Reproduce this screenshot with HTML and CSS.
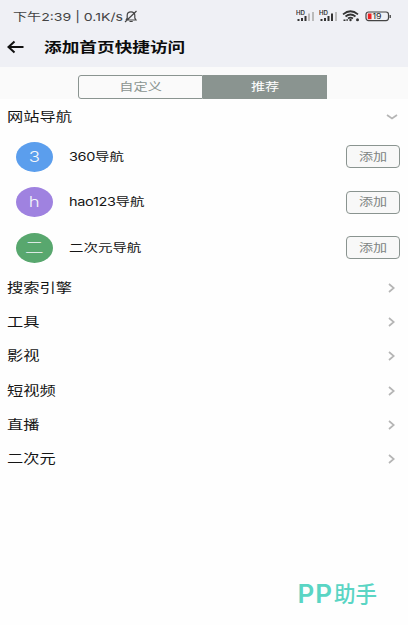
FILE: index.html
```html
<!DOCTYPE html>
<html lang="zh-CN">
<head>
    <meta charset="UTF-8">
    <meta name="viewport" content="width=device-width, initial-scale=1.0">
    <title>添加首页快捷访问</title>
    <link rel="stylesheet" href="styles.css">
</head>
<body>
    <header class="header">
        <div class="status-bar">
            <span class="status-text wide">下午2:39 | 0.1K/s</span>
            <svg class="mute" width="14" height="13" viewBox="0 0 14 13">
                <path d="M2 10h10l-1.2-2V5.2C10.800 3 9.200 1.800 7 1.800S3.200 3 3.200 5.200V8L2 10M5.500 11.500h3.200M1 12L12.500 1" />
            </svg>
            <div class="indicators">
                <svg width="19" height="12" viewBox="0 0 19 12">
                    <text class="hd" x="0" y="4.500" textLength="9" lengthAdjust="spacingAndGlyphs">HD</text>
                    <path class="dark" d="M1.500 9h2v2h-2zM5 8h2v3H5zM8.500 6h2v5h-2z" />
                    <path class="dim" d="M12 3.500h2V11h-2zM16 2h2v9h-2z" />
                </svg>
                <svg class="signal-two" width="19" height="12" viewBox="0 0 19 12">
                    <text class="hd" x="0" y="4.500" textLength="9" lengthAdjust="spacingAndGlyphs">HD</text>
                    <path class="dark" d="M1.500 9h2v2h-2zM5 8h2v3H5zM8.500 6h2v5h-2zM12 3.500h2V11h-2z" />
                    <path class="dim" d="M16 2h2v9h-2z" />
                </svg>
                <svg class="wifi" width="18" height="12" viewBox="0 0 18 12">
                    <path d="M1 4.300Q8.500-1.800 16 4.300M3.500 6.500Q8.500 2.500 13.500 6.500M6 8.500Q8.500 6.600 11 8.500" />
                    <circle class="dark" cx="8.500" cy="10" r="1.200" />
                    <path class="dark" d="M1.500 9.500h2v1.500h-2zM4.500 9h1.200v2H4.500z" />
                    <circle class="dark" cx="15.500" cy="9.800" r="1.500" />
                </svg>
                <svg class="battery" width="27" height="11" viewBox="0 0 27 11">
                    <rect class="shell" x="1" y="1" width="22.500" height="8.600" rx="2.500" />
                    <path class="dark" d="M24.600 4h1.200v3h-1.200z" />
                    <path class="level" d="M2.800 2.500h3.700v5.700H2.800z" />
                    <text class="percent" x="7.500" y="8" textLength="9" lengthAdjust="spacingAndGlyphs">19</text>
                </svg>
            </div>
        </div>
        <div class="title-bar">
            <svg width="18" height="14" viewBox="0 0 18 14">
                <path class="back" d="M17.500 7H2.500M8.500 1.500L2.500 7l6 5.500" />
            </svg>
            <h1 class="wide">添加首页快捷访问</h1>
        </div>
    </header>

    <nav class="tabs">
        <button class="tab"><span class="wide">自定义</span></button>
        <button class="tab active"><span class="wide">推荐</span></button>
    </nav>

    <main>
        <div class="section first">
            <span class="wide">网站导航</span>
            <svg class="chevron-down" width="12" height="6" viewBox="0 0 12 6"><path d="M1 1l5 3.500L11 1" /></svg>
        </div>
        <ul class="sites">
            <li class="site">
                <span class="avatar blue"><span class="wide">3</span></span>
                <span class="name wide"><span class="latin">360</span>导航</span>
                <button class="add"><span class="wide">添加</span></button>
            </li>
            <li class="site">
                <span class="avatar purple"><span class="wide">h</span></span>
                <span class="name wide"><span class="latin">hao123</span>导航</span>
                <button class="add"><span class="wide">添加</span></button>
            </li>
            <li class="site">
                <span class="avatar green"><span class="wide">二</span></span>
                <span class="name wide">二次元导航</span>
                <button class="add"><span class="wide">添加</span></button>
            </li>
        </ul>
        <div class="section">
            <span class="wide">搜索引擎</span>
            <svg class="chevron" width="7" height="10" viewBox="0 0 7 10"><path d="M1 1l4.800 4L1 9" /></svg>
        </div>
        <div class="section">
            <span class="wide">工具</span>
            <svg class="chevron" width="7" height="10" viewBox="0 0 7 10"><path d="M1 1l4.800 4L1 9" /></svg>
        </div>
        <div class="section">
            <span class="wide">影视</span>
            <svg class="chevron" width="7" height="10" viewBox="0 0 7 10"><path d="M1 1l4.800 4L1 9" /></svg>
        </div>
        <div class="section">
            <span class="wide">短视频</span>
            <svg class="chevron" width="7" height="10" viewBox="0 0 7 10"><path d="M1 1l4.800 4L1 9" /></svg>
        </div>
        <div class="section">
            <span class="wide">直播</span>
            <svg class="chevron" width="7" height="10" viewBox="0 0 7 10"><path d="M1 1l4.800 4L1 9" /></svg>
        </div>
        <div class="section">
            <span class="wide">二次元</span>
            <svg class="chevron" width="7" height="10" viewBox="0 0 7 10"><path d="M1 1l4.800 4L1 9" /></svg>
        </div>
    </main>

    <footer class="brand"><span class="brand-pp">PP</span><span>助手</span></footer>
</body>
</html>
```
FILE: styles.css
```css
* {
    margin: 0;
    padding: 0;
    box-sizing: border-box;
}

body {
    width: 408px;
    height: 625px;
    display: flex;
    flex-direction: column;
    overflow: hidden;
    background: #fefefe;
    color: #151515;
    font-family: Inter, "Noto Sans CJK SC", sans-serif;
}

svg {
    display: block;
    fill: none;
    flex: none;
}

button {
    font-family: inherit;
}

/* extended letterforms */
.wide {
    display: inline-block;
    transform: scaleX(1.28);
    transform-origin: left center;
    white-space: nowrap;
}

.header {
    height: 67px;
    background: #eff0f5;
}

.status-bar {
    height: 32px;
    display: flex;
    align-items: center;
    padding-left: 13px;
}

.status-text {
    width: 111px;
    font-size: 11px;
    color: #444;
}

.mute path {
    stroke: #444;
    stroke-width: 1.2;
}

.indicators {
    display: flex;
    align-items: center;
    margin-left: auto;
    padding-right: 16px;
}

.signal-two {
    margin-left: 4px;
}

.wifi {
    margin-left: 4px;
}

.wifi path {
    stroke: #333;
    stroke-width: 1.7;
}

.wifi .dark {
    stroke: none;
}

.battery {
    margin-left: 5px;
}

.dark {
    fill: #333;
}

.dim {
    fill: #bbb;
}

.hd {
    font-size: 5.5px;
    font-weight: 600;
    fill: #333;
}

.shell {
    stroke: #444;
    stroke-width: 1.2;
}

.level {
    fill: #ee2222;
}

.percent {
    font-size: 7.5px;
    fill: #222;
}

.title-bar {
    height: 30px;
    display: flex;
    align-items: center;
    padding-left: 6px;
}

.title-bar h1 {
    margin-left: 20px;
    font-size: 13.8px;
    font-weight: 700;
    line-height: 20px;
    color: #0c0c0c;
}

.back {
    stroke: #111;
    stroke-width: 2;
}

.tabs {
    height: 32px;
    display: flex;
    padding: 8px 81px 0 78px;
    background: #fafafa;
}

.tab {
    width: 125px;
    height: 24px;
    background: #fafafa;
    border: 1px solid #8a9490;
    border-radius: 3px 0 0 3px;
    color: #8a9490;
    font-size: 11.1px;
    line-height: 20px;
}

.tab .wide,
.avatar .wide,
.add .wide {
    transform-origin: center;
}

.tab.active {
    width: 124px;
    border-radius: 0;
    background: #8a9490;
    color: #fff;
}

.section {
    height: 34.3px;
    display: flex;
    align-items: center;
    justify-content: space-between;
    padding: 0 13px 0 6.5px;
    font-size: 12.7px;
    line-height: 20px;
}

.section.first {
    height: 35px;
    padding-right: 10px;
}

.chevron path,
.chevron-down path {
    stroke: #b5b5b5;
    stroke-width: 1.7;
}

.sites {
    list-style: none;
}

.site {
    height: 45.5px;
    display: flex;
    align-items: center;
    padding: 0 8px 0 16px;
}

.avatar {
    width: 37px;
    height: 30px;
    display: flex;
    align-items: center;
    justify-content: center;
    border-radius: 50%;
    color: #f4f6fa;
    font-size: 14.5px;
    font-weight: 300;
    line-height: 20px;
}

.blue {
    background: #5b9eed;
}

.purple {
    background: #9f82e0;
}

.green {
    background: #58a76e;
}

.name {
    margin-left: 15.5px;
    font-size: 11.3px;
    line-height: 20px;
}

.latin {
    letter-spacing: -0.25px;
}

.add {
    width: 54px;
    height: 23px;
    margin-left: auto;
    border: 1px solid #8a9490;
    border-radius: 4px;
    background: #f8f8f8;
    color: #808583;
    font-size: 11px;
    line-height: 20px;
}

.brand {
    display: flex;
    align-items: center;
    gap: 1px;
    margin: auto 31px 18px auto;
    color: #5ad5c4;
    font-size: 21.5px;
    font-weight: 500;
    line-height: 26px;
}

.brand-pp {
    font-size: 26px;
    font-weight: 600;
    letter-spacing: 1px;
}
```
